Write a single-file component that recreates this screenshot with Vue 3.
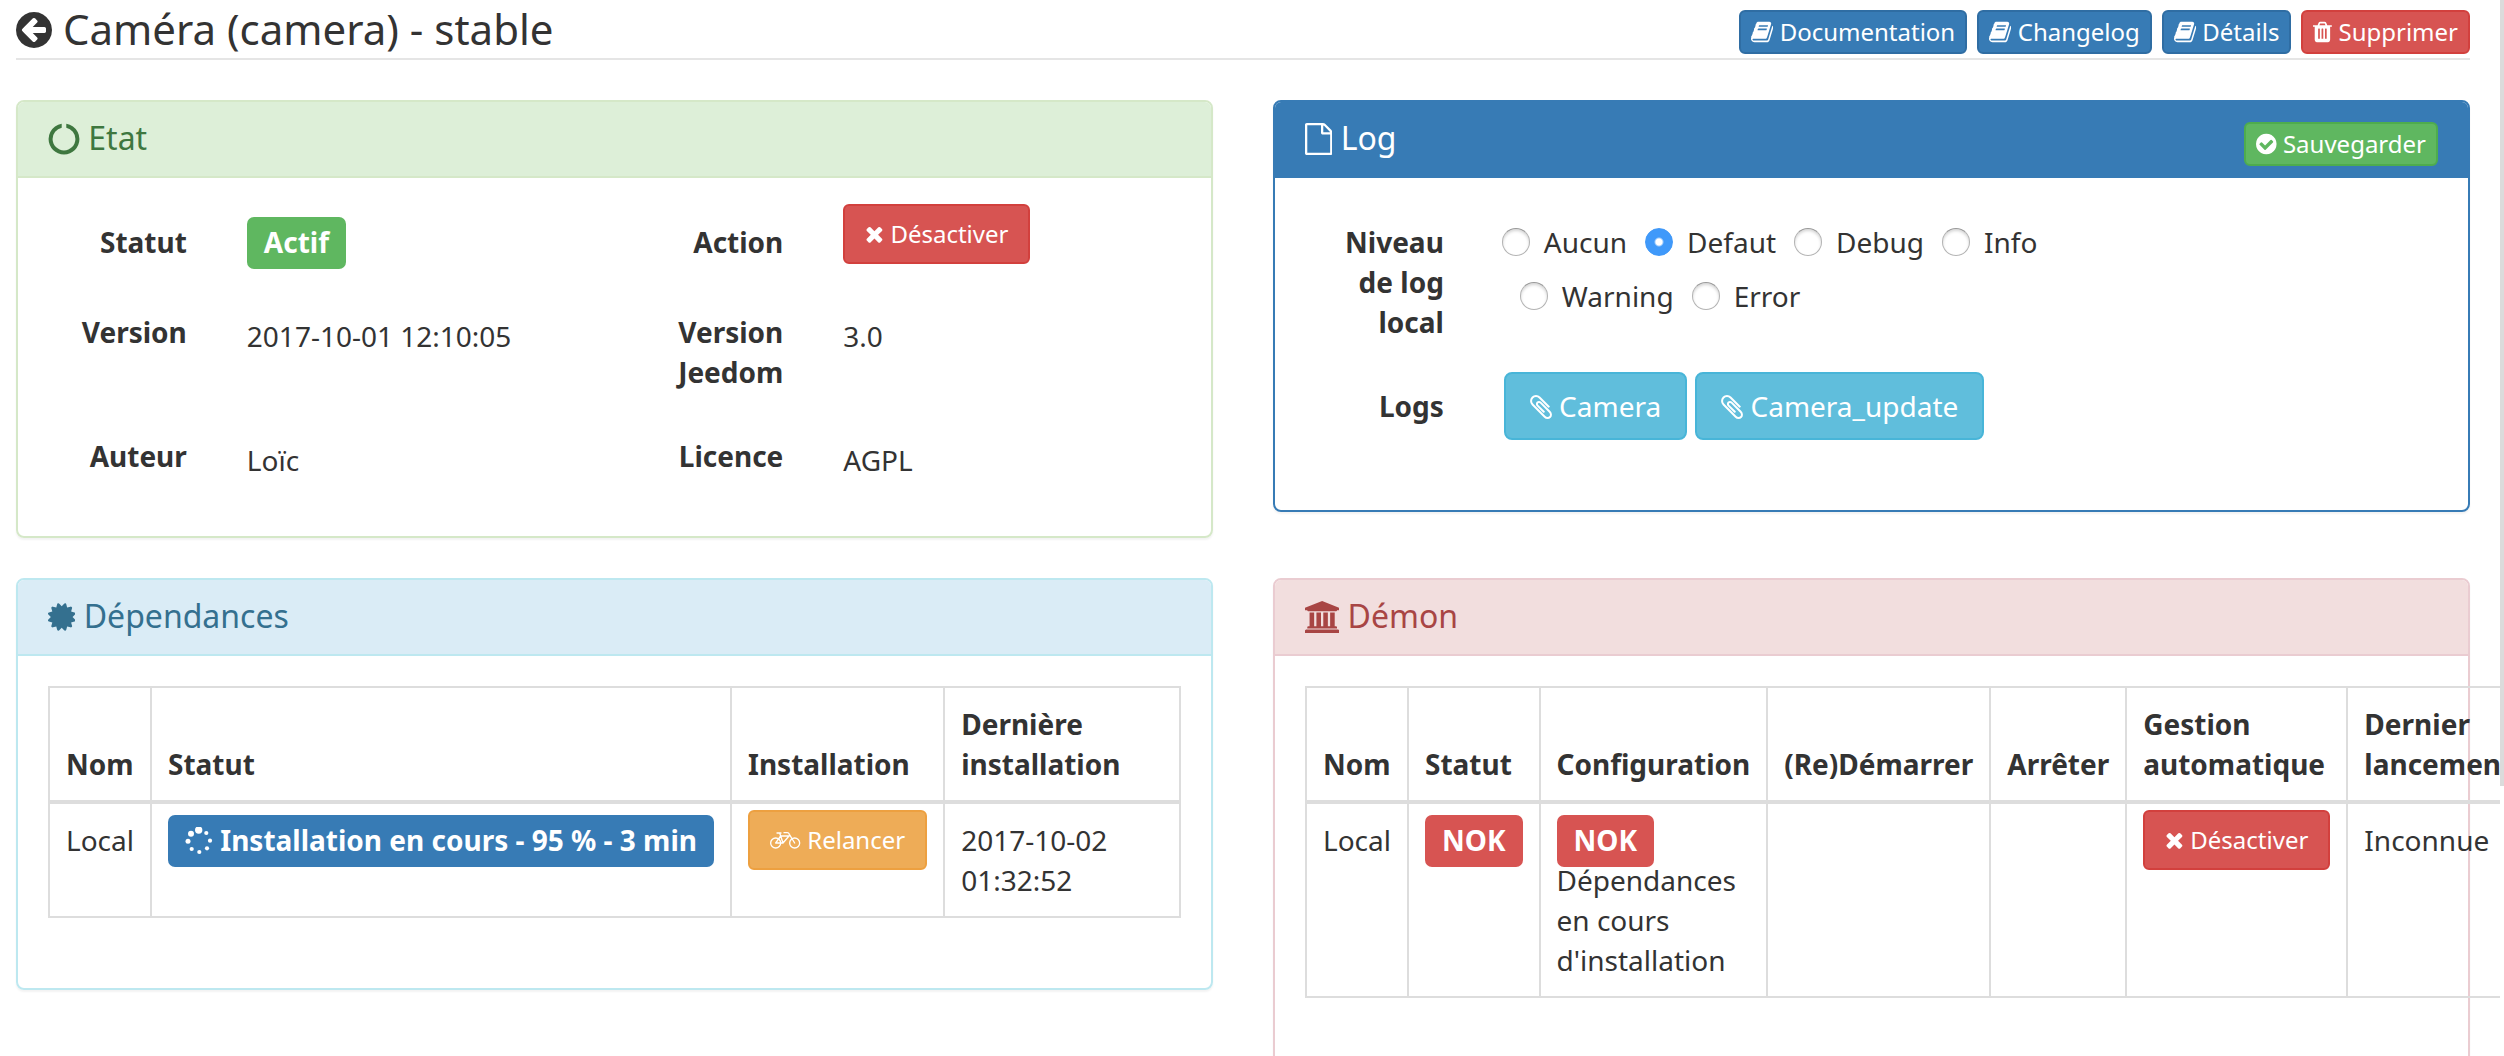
<script setup>
import { h, ref } from 'vue'

const glyphs = {
  back: ['128 0 1536 1792', 'M1408 960v-128q0-26-19-45t-45-19h-502l189-189q19-19 19-45t-19-45l-91-91q-18-18-45-18t-45 18l-362 362-91 91q-18 18-18 45t18 45l91 91 362 362q18 18 45 18t45-18l91-91q18-18 18-45t-18-45l-189-189h502q26 0 45-19t19-45zm256-64q0 209-103 385.5t-279.5 279.5-385.5 103-385.5-103-279.5-279.5-103-385.5 103-385.5 279.5-279.5 385.5-103 385.5 103 279.5 279.5 103 385.5z'],
  book: ['64 0 1664 1792', 'M1703 478q40 57 18 129l-275 906q-19 64-76.5 107.5t-122.5 43.5h-923q-77 0-148.5-53.5t-99.5-131.5q-24-67-2-127 0-4 3-27t4-37q1-8-3-21.5t-3-19.5q2-11 8-21t16.5-23.5 16.5-23.5q23-38 45-91.5t30-91.5q3-10 .5-30t-.5-28q3-11 17-28t17-23q21-36 42-92t25-90q1-9-2.5-32t.5-28q4-13 22-30.5t22-22.5q19-26 42.5-84.5t27.5-96.5q1-8-3-25.5t-2-26.5q2-8 9-18t18-23 17-21q8-12 16.5-30.5t15-35 16-36 19.5-32 26.5-23.5 36-11.5 47.5 5.5l-1 3q38-9 51-9h761q74 0 114 56t18 130l-274 906q-36 119-71.5 153.5t-128.5 34.5h-869q-27 0-38 15-11 16-1 43 24 70 144 70h923q29 0 56-15.5t35-41.5l300-987q7-22 5-57 38 15 59 43zm-1064 2q-4 13 2 22.5t20 9.5h608q13 0 25.5-9.5t16.5-22.5l21-64q4-13-2-22.5t-20-9.5h-608q-13 0-25.5 9.5t-16.5 22.5zm-83 256q-4 13 2 22.5t20 9.5h608q13 0 25.5-9.5t16.5-22.5l21-64q4-13-2-22.5t-20-9.5h-608q-13 0-25.5 9.5t-16.5 22.5z'],
  trash: ['192 0 1408 1792', 'M704 1376v-704q0-14-9-23t-23-9h-64q-14 0-23 9t-9 23v704q0 14 9 23t23 9h64q14 0 23-9t9-23zm256 0v-704q0-14-9-23t-23-9h-64q-14 0-23 9t-9 23v704q0 14 9 23t23 9h64q14 0 23-9t9-23zm256 0v-704q0-14-9-23t-23-9h-64q-14 0-23 9t-9 23v704q0 14 9 23t23 9h64q14 0 23-9t9-23zm-544-992h448l-48-117q-7-9-17-11h-317q-10 2-17 11zm928 32v64q0 14-9 23t-23 9h-96v948q0 83-47 143.5t-113 60.5h-832q-66 0-113-58.5t-47-141.5v-952h-96q-14 0-23-9t-9-23v-64q0-14 9-23t23-9h309l70-167q15-37 54-63t79-26h320q40 0 79 26t54 63l70 167h309q14 0 23 9t9 23z'],
  check: ['128 0 1536 1792', 'M1412 734q0-28-18-46l-91-90q-19-19-45-19t-45 19l-408 407-226-226q-19-19-45-19t-45 19l-91 90q-18 18-18 46 0 27 18 45l362 362q19 19 45 19 27 0 46-19l543-543q18-18 18-45zm252 162q0 209-103 385.5t-279.5 279.5-385.5 103-385.5-103-279.5-279.5-103-385.5 103-385.5 279.5-279.5 385.5-103 385.5 103 279.5 279.5 103 385.5z'],
  file: ['128 0 1536 1792', 'M1596 380q28 28 48 76t20 88v1152q0 40-28 68t-68 28h-1344q-40 0-68-28t-28-68v-1600q0-40 28-68t68-28h896q40 0 88 20t76 48zm-444-244v376h376q-10-29-22-41l-313-313q-12-12-41-22zm384 1528v-1024h-416q-40 0-68-28t-28-68v-416h-768v1536h1280z'],
  ring: ['0 0 1792 1792', 'M1760 896q0 176-68.5 336t-184 275.5-275.5 184-336 68.5-336-68.5-275.5-184-184-275.5-68.5-336q0-213 97-398.5t265-305.5 374-151v228q-221 45-366.5 221t-145.5 406q0 130 51 248.5t136.5 204 204 136.5 248.5 51 248.5-51 204-136.5 136.5-204 51-248.5q0-230-145.5-406t-366.5-221v-228q206 31 374 151t265 305.5 97 398.5z'],
  certificate: ['128 0 1536 1792', 'M1504 896l138 135q30 28 20 70-12 41-52 51l-188 48 53 186q12 41-19 70-29 31-70 19l-186-53-48 188q-10 40-51 52-12 2-19 2-31 0-51-22l-135-138-135 138q-28 30-70 20-41-11-51-52l-48-188-186 53q-41 12-70-19-31-29-19-70l53-186-188-48q-40-10-52-51-10-42 20-70l138-135-138-135q-30-28-20-70 12-41 52-51l188-48-53-186q-12-41 19-70 29-31 70-19l186 53 48-188q10-41 51-51 41-12 70 19l135 139 135-139q29-30 70-19 41 10 51 51l48 188 186-53q41-12 70 19 31 29 19 70l-53 186 188 48q40 10 52 51 10 42-20 70z'],
  bank: ['0 0 1920 1792', 'M960 0l960 384v128h-128q0 26-20.5 45t-48.5 19h-1526q-28 0-48.5-19t-20.5-45h-128v-128zm-704 640h256v768h128v-768h256v768h128v-768h256v768h128v-768h256v768h59q28 0 48.5 19t20.5 45v64h-1664v-64q0-26 20.5-45t48.5-19h59v-768zm1595 960q28 0 48.5 19t20.5 45v128h-1920v-128q0-26 20.5-45t48.5-19h1782z'],
  clip: ['192 0 1408 1792', 'M1596 1385q0 117-79 196t-196 79q-135 0-235-100l-777-776q-113-115-113-271 0-159 110-270t269-111q158 0 273 113l605 606q10 10 10 22 0 16-30.5 46.5t-46.5 30.5q-13 0-23-10l-606-607q-79-77-181-77-106 0-179 75t-73 181q0 105 76 181l776 777q63 63 145 63 64 0 106-42t42-106q0-82-63-145l-581-581q-26-24-60-24-29 0-48 19t-19 48q0 32 25 59l410 410q10 10 10 22 0 16-31 47t-47 31q-12 0-22-10l-410-410q-63-61-63-149 0-82 57-139t139-57q88 0 149 63l581 581q100 98 100 235z'],
  times: ['192 0 1408 1792', 'M1490 1322q0 40-28 68l-136 136q-28 28-68 28t-68-28l-294-294-294 294q-28 28-68 28t-68-28l-136-136q-28-28-28-68t28-68l294-294-294-294q-28-28-28-68t28-68l136-136q28-28 68-28t68 28l294 294 294-294q28-28 68-28t68 28l136 136q28 28 28 68t-28 68l-294 294 294 294q28 28 28 68z'],
}

const Icon = (props) =>
  h('svg', { class: 'icon', viewBox: glyphs[props.name][0], 'aria-hidden': 'true' }, [
    h('path', { d: glyphs[props.name][1] }),
  ])
Icon.props = ['name']

// [cx, cy, r] of each spinner dot, largest first
const dots = [
  [13.7, 3.1, 3.7], [6, 6.7, 3], [3, 14.3, 2.5], [6.7, 22, 2.1],
  [14.3, 25, 2.1], [22, 21.3, 2.1], [25, 13.7, 2.1], [21.3, 6, 2.1],
]

const links = ['Documentation', 'Changelog', 'Détails']
const levels = ['Aucun', 'Defaut', 'Debug', 'Info', 'Warning', 'Error']
const level = ref('Defaut')
const logs = ['Camera', 'Camera_update']
</script>

<template>
  <div class="page">
    <main class="content">
      <header class="top">
        <h1 class="title"><Icon name="back" /> Caméra (camera) - stable</h1>
        <nav class="actions">
          <a v-for="l in links" :key="l" href="#" class="btn xs primary"><Icon name="book" /> {{ l }}</a>
          <button type="button" class="btn xs danger"><Icon name="trash" /> Supprimer</button>
        </nav>
      </header>

      <div class="grid">
        <section class="panel green">
          <div class="head"><h2><Icon name="ring" /> Etat</h2></div>
          <div class="body form">
            <div class="row">
              <span class="lbl">Statut</span>
              <div class="val badge"><span class="label success">Actif</span></div>
              <span class="lbl">Action</span>
              <div class="val lift"><button type="button" class="btn sm danger"><Icon name="times" /> Désactiver</button></div>
            </div>
            <div class="row">
              <span class="lbl">Version</span>
              <div class="val">2017-10-01 12:10:05</div>
              <span class="lbl">Version Jeedom</span>
              <div class="val">3.0</div>
            </div>
            <div class="row">
              <span class="lbl">Auteur</span>
              <div class="val">Loïc</div>
              <span class="lbl">Licence</span>
              <div class="val">AGPL</div>
            </div>
          </div>
        </section>

        <section class="panel blue">
          <div class="head">
            <h2><Icon name="file" /> Log</h2>
            <button type="button" class="btn xs success"><Icon name="check" /> Sauvegarder</button>
          </div>
          <div class="body form log">
            <div class="row wide">
              <span id="lvl" class="lbl">Niveau de log local</span>
              <div class="radios" role="radiogroup" aria-labelledby="lvl">
                <label v-for="l in levels" :key="l" class="radio">
                  <input v-model="level" type="radio" name="level" :value="l">{{ l }}
                </label>
              </div>
            </div>
            <div class="row wide">
              <span class="lbl">Logs</span>
              <div class="val logs">
                <button v-for="l in logs" :key="l" type="button" class="btn info"><Icon name="clip" /> {{ l }}</button>
              </div>
            </div>
          </div>
        </section>

        <section class="panel cyan">
          <div class="head"><h2><Icon name="certificate" /> Dépendances</h2></div>
          <div class="body">
            <table>
              <thead>
                <tr><th>Nom</th><th>Statut</th><th>Installation</th><th>Dernière installation</th></tr>
              </thead>
              <tbody>
                <tr>
                  <td>Local</td>
                  <td>
                    <span class="label primary"><svg class="icon" viewBox="0 0 28 28" aria-hidden="true"><circle v-for="(d, i) in dots" :key="i" :cx="d[0]" :cy="d[1]" :r="d[2]" /></svg> Installation en cours - 95 % - 3 min</span>
                  </td>
                  <td class="act">
                    <button type="button" class="btn sm warning"><svg class="icon line" viewBox="66 58 93 72" aria-hidden="true"><circle cx="83" cy="103" r="15" /><circle cx="140" cy="103" r="15" /><path d="M87 73h12M95 73l10 30H83l15-21h25l-18 21M108 72h10q4 0 6 5l16 26" /></svg> Relancer</button>
                  </td>
                  <td>2017-10-02 01:32:52</td>
                </tr>
              </tbody>
            </table>
          </div>
        </section>

        <section class="panel red">
          <div class="head"><h2><Icon name="bank" /> Démon</h2></div>
          <div class="body">
            <table>
              <thead>
                <tr>
                  <th>Nom</th><th>Statut</th><th>Configuration</th><th>(Re)Démarrer</th><th>Arrêter</th>
                  <th>Gestion automatique</th><th>Dernier lancement</th>
                </tr>
              </thead>
              <tbody>
                <tr>
                  <td>Local</td>
                  <td><span class="label danger">NOK</span></td>
                  <td><span class="label danger">NOK</span> Dépendances en cours d'installation</td>
                  <td></td>
                  <td></td>
                  <td class="act"><button type="button" class="btn sm danger"><Icon name="times" /> Désactiver</button></td>
                  <td>Inconnue</td>
                </tr>
              </tbody>
            </table>
          </div>
        </section>
      </div>
    </main>
    <div class="rail"><div class="thumb"></div></div>
  </div>
</template>

<style>
body {
  margin: 0;
  background: #fff;
}
</style>

<style scoped>
.page {
  display: flex;
  height: 100vh;
  overflow: hidden;
  font: 28px/40px "Noto Sans", "Open Sans", sans-serif;
  color: #333;
}
.page * { box-sizing: border-box; }
.content {
  flex: 1;
  min-width: 0;
  padding: 0 30px 0 16px;
  overflow: hidden;
}
.rail { width: 4px; }
.thumb {
  height: 74.4%;
  background: #dbdbdb;
}

.icon {
  height: 28px;
  vertical-align: -4px;
  fill: currentColor;
}
.line {
  fill: none;
  stroke: currentColor;
  stroke-width: 4;
  stroke-linecap: round;
  stroke-linejoin: round;
}

.top {
  display: flex;
  justify-content: space-between;
  align-items: flex-start;
  margin-bottom: 40px;
  border-bottom: 2px solid #e5e5e5;
}
.title {
  margin: 0;
  font-size: 42px;
  line-height: 58px;
  font-weight: 400;
}
.title .icon {
  height: 42px;
  vertical-align: -6px;
}
.actions {
  display: flex;
  gap: 10px;
  padding-top: 10px;
}

.btn {
  display: inline-block;
  padding: 12px 24px;
  border: 2px solid;
  border-radius: 8px;
  font: inherit;
  color: #fff;
  text-decoration: none;
  white-space: nowrap;
  cursor: pointer;
}
.xs, .sm {
  border-radius: 6px;
  font-size: 24px;
  line-height: 36px;
}
.xs { padding: 2px 10px; }
.sm {
  padding: 10px 20px;
  vertical-align: top;
}
.xs .icon, .sm .icon {
  height: 24px;
  vertical-align: -3px;
}
.primary { background: #377bb5; border-color: #2f6da3; }
.danger { background: #d75452; border-color: #d2403d; }
.success { background: #5fb760; border-color: #4eac4d; }
.info { background: #60bedc; border-color: #48b5d8; }
.warning { background: #eeac57; border-color: #eda040; }

.label {
  padding: 6px 17px 8px;
  border-radius: 7px;
  font-weight: 700;
  color: #fff;
  white-space: nowrap;
}

.grid {
  display: grid;
  grid-template-columns: repeat(2, minmax(0, 1fr));
  gap: 40px 60px;
  align-items: start;
}
.panel {
  border: 2px solid var(--line);
  border-radius: 8px;
  box-shadow: 0 2px 2px rgba(0, 0, 0, 0.05);
}
.head {
  display: flex;
  justify-content: space-between;
  align-items: flex-start;
  height: 76px;
  padding: 20px 30px;
  border-bottom: 2px solid var(--line);
  border-radius: 6px 6px 0 0;
  background: var(--bg);
  color: var(--fg);
}
.head h2 {
  margin: 0;
  font-size: 32px;
  line-height: 32px;
  font-weight: 400;
}
.head h2 .icon {
  height: 32px;
  vertical-align: -5px;
}
.green { --line: #d5e8c8; --bg: #ddefd8; --fg: #3e773f; }
.blue { --line: #377bb5; --bg: #377bb5; --fg: #fff; }
.cyan { --line: #bde8f0; --bg: #daecf6; --fg: #34708f; }
.red { --line: #eaccd1; --bg: #f2dede; --fg: #a84544; }

.body { padding: 30px 30px 70px; }
.form {
  display: flex;
  flex-direction: column;
  gap: 30px;
  padding: 30px 0 56px;
}
.log { padding-bottom: 70px; }
.row {
  display: grid;
  grid-template-columns: 2fr 4fr 2fr 4fr;
}
.wide { grid-template-columns: 2fr 6fr 4fr; }
.lbl {
  padding: 14px 30px 0;
  font-weight: 700;
  text-align: right;
}
.val { padding: 18px 30px 0; }
.badge { padding-top: 14px; }
.lift {
  padding-top: 0;
  margin: -4px 0 4px;
}
.logs {
  display: flex;
  gap: 8px;
  padding-top: 0;
}
.radios {
  display: flex;
  flex-wrap: wrap;
  align-content: flex-start;
  padding: 0 28px;
}
.radio {
  display: flex;
  align-items: center;
  gap: 14px;
  height: 54px;
  padding-top: 14px;
  margin-left: 18px;
}
.radio:first-child { margin-left: 0; }
.radio input {
  appearance: none;
  width: 28px;
  height: 28px;
  margin: 0;
  border: 1px solid #b3b3b3;
  border-top-color: #999;
  border-radius: 50%;
  background: #fff;
  box-shadow: inset 0 2px 3px rgba(0, 0, 0, 0.16);
}
.radio input:checked {
  border-color: #3f98f8;
  background: radial-gradient(circle, #fff 0 3px, #3f99fa 5px);
  box-shadow: none;
}

table {
  width: 100%;
  border-collapse: collapse;
}
th, td {
  padding: 16px;
  border: 2px solid #ddd;
  text-align: left;
  vertical-align: top;
}
th {
  vertical-align: bottom;
  border-bottom-width: 4px;
}
.act { padding-top: 6px; }
</style>
